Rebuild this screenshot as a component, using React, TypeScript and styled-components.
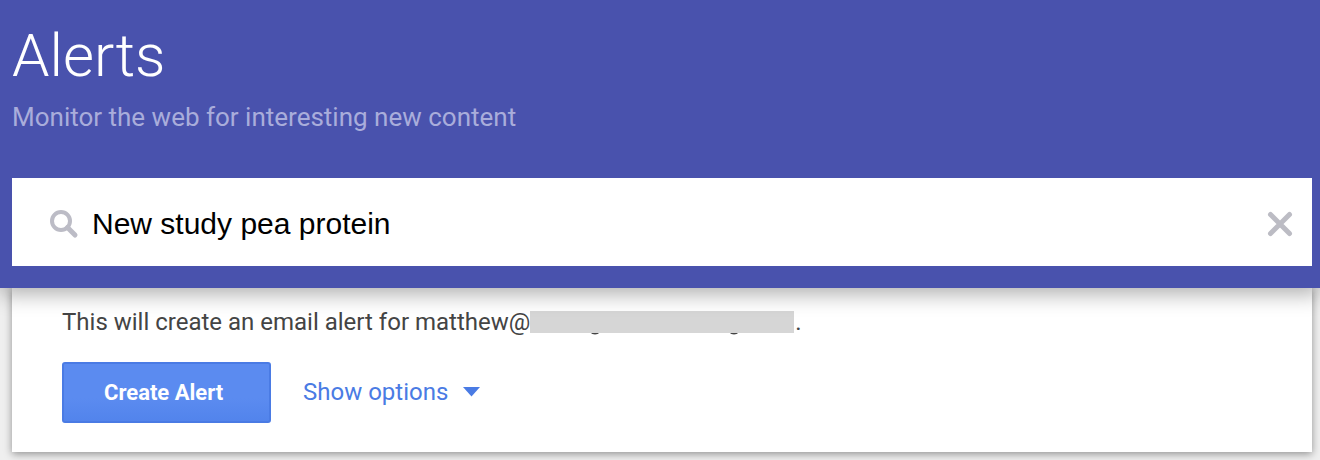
import React, { useState } from "react";
import styled, { createGlobalStyle } from "styled-components";

const GlobalStyle = createGlobalStyle`
  *, *::before, *::after { box-sizing: border-box; }
  body {
    margin: 0;
    background: #efefef;
    font-family: Roboto, "Liberation Sans", sans-serif;
  }
`;

const Page = styled.div`
  min-height: 100vh;
  overflow: hidden;
`;

const Header = styled.header`
  position: relative;
  z-index: 1;
  padding: 20px 8px 22px 12px;
  background: #4952ad;
  box-shadow: 0 6px 20px rgba(0, 0, 0, 0.32);
`;

const Title = styled.h1`
  margin: 0;
  color: #fff;
  font-size: 60px;
  font-weight: 300;
  line-height: 72px;
`;

const Subtitle = styled.p`
  margin: 8px 0 44px;
  color: #a9addb;
  font-size: 26px;
  line-height: 34px;
`;

const SearchBar = styled.form`
  display: flex;
  align-items: center;
  height: 88px;
  padding: 4px 18px 0 36px;
  background: #fff;
`;

const SearchInput = styled.input`
  flex: 1;
  min-width: 0;
  margin: 0 12px;
  padding: 0;
  border: 0;
  outline: 0;
  background: none;
  color: #000;
  font-family: "Liberation Sans", sans-serif;
  font-size: 30px;
  line-height: 40px;
`;

const ClearButton = styled.button`
  display: flex;
  padding: 0;
  border: 0;
  background: none;
  cursor: pointer;
`;

const Card = styled.main`
  margin: 0 8px 8px 12px;
  padding: 18px 50px 29px;
  background: #fff;
  box-shadow: 0 2px 8px rgba(0, 0, 0, 0.4);
`;

const Notice = styled.p`
  display: flex;
  align-items: center;
  margin: 0;
  color: #444;
  font-size: 24px;
  line-height: 32px;
`;

const Actions = styled.div`
  display: flex;
  align-items: flex-start;
  gap: 32px;
  margin-top: 24px;
`;

const CreateButton = styled.button`
  width: 209px;
  height: 61px;
  padding: 0 40px;
  border: 2px solid #4a7be4;
  border-radius: 3px;
  background: linear-gradient(#5b8bf0 60%, #5284ec);
  color: #fff;
  font-family: inherit;
  font-size: 22px;
  font-weight: 700;
  text-align: left;
  white-space: nowrap;
  cursor: pointer;
`;

const OptionsButton = styled.button`
  display: flex;
  align-items: center;
  gap: 15px;
  height: 60px;
  padding: 0;
  border: 0;
  background: none;
  color: #4a7be4;
  font-family: inherit;
  font-size: 24px;
  line-height: 32px;
  cursor: pointer;
`;

const SearchIcon = () => (
  <svg width="32" height="32" viewBox="0 0 32 32" fill="none" stroke="#bcbcc6" aria-hidden="true">
    <circle cx="13" cy="13" r="9" strokeWidth="4" />
    <path d="M19.5 19.5L27 27" strokeWidth="5" strokeLinecap="round" />
  </svg>
);

const ClearIcon = () => (
  <svg width="28" height="28" viewBox="0 0 28 28" stroke="#bcbcc4" strokeWidth="5" strokeLinecap="round" aria-hidden="true">
    <path d="M4.5 4.5L23.5 23.5M23.5 4.5L4.5 23.5" />
  </svg>
);

const HiddenAddress = () => (
  <svg width="265" height="26" viewBox="0 0 265 26" role="img" aria-label="Hidden address">
    <path d="M60 22Q65 27 70 22M199 22Q204 27 209 22" fill="none" stroke="#444" strokeWidth="2" />
    <path d="M0 2H264V24H0Z" fill="#d6d6d6" />
  </svg>
);

const CaretIcon = () => (
  <svg width="17" height="10" viewBox="0 0 17 10" aria-hidden="true">
    <path d="M0 0H17L8.5 9.5Z" fill="#4a7be4" />
  </svg>
);

export default function App() {
  const [query, setQuery] = useState("New study pea protein");
  return (
    <Page>
      <GlobalStyle />
      <Header>
        <Title>Alerts</Title>
        <Subtitle>Monitor the web for interesting new content</Subtitle>
        <SearchBar role="search" onSubmit={(e) => e.preventDefault()}>
          <SearchIcon />
          <SearchInput
            type="text"
            aria-label="Create an alert about"
            value={query}
            onChange={(e) => setQuery(e.target.value)}
          />
          <ClearButton type="button" aria-label="Clear" onClick={() => setQuery("")}>
            <ClearIcon />
          </ClearButton>
        </SearchBar>
      </Header>
      <Card>
        <Notice>
          <span>This will create an email alert for matthew@</span>
          <HiddenAddress />
          <span>.</span>
        </Notice>
        <Actions>
          <CreateButton type="button">Create Alert</CreateButton>
          <OptionsButton type="button">
            Show options
            <CaretIcon />
          </OptionsButton>
        </Actions>
      </Card>
    </Page>
  );
}
